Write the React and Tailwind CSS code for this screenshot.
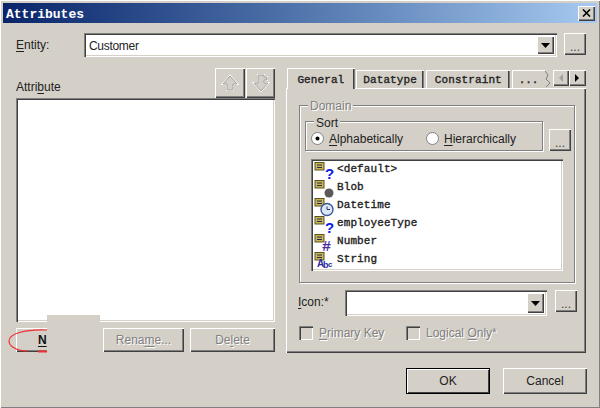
const raised = "shadow-[inset_1px_1px_0_#fff,inset_-1px_-1px_0_#404040,inset_-2px_-2px_0_#808080]";
const sunken = "shadow-[inset_1px_1px_0_#808080,inset_2px_2px_0_#404040,inset_-1px_-1px_0_#fff,inset_-2px_-2px_0_#d4d0c8]";
const dim = "text-[#808080] [text-shadow:1px_1px_0_#fff]";
const mono = "font-['Liberation_Mono'] text-[11px] text-[#222] [-webkit-text-stroke:0.35px_#222]";

function Btn({ className = "", children }) {
  return <div className={`flex items-center justify-center bg-[#d4d0c8] ${raised} ${className}`}>{children}</div>;
}

function Dots() {
  return <Btn className="w-[22px] h-[22px] text-[12px] text-[#404040] leading-none pt-[6px] shrink-0">...</Btn>;
}

function U({ children }) {
  return <span className="underline underline-offset-2">{children}</span>;
}

function Combo({ className = "", text }) {
  return (
    <div className={`flex items-stretch bg-white p-[3px] ${sunken} ${className}`}>
      <div className="flex-1 flex items-center text-[12px] text-[#222] pl-[2px] pt-px tracking-[-0.3px]">{text}</div>
      <Btn className="w-[17px]">
        <svg width="9" height="5" viewBox="0 0 9 5"><path d="M0 0h9L4.5 5z" fill="#000" /></svg>
      </Btn>
    </div>
  );
}

function Tab({ w, active, children }) {
  return (
    <div
      className={`flex items-center justify-center tracking-[0.1px] ${mono} bg-[#d4d0c8] shadow-[inset_1px_1px_0_#fff,inset_-1px_0_0_#808080,inset_-2px_0_0_#404040] ${active ? "relative h-[21px] pt-[4px] -mb-[1px] z-10" : "h-[18px] pt-[2px]"}`}
      style={{ width: w }}
    >
      {children}
    </div>
  );
}

function Group({ className = "", title, titleClass = "", children }) {
  return (
    <div className={`relative border border-[#808080] shadow-[1px_1px_0_#fff,inset_1px_1px_0_#fff] ${className}`}>
      <span className={`absolute left-[8px] px-[2px] bg-[#d4d0c8] text-[12px] leading-[16px] ${titleClass}`}>{title}</span>
      {children}
    </div>
  );
}

function Radio({ checked }) {
  return (
    <svg width="13" height="13" viewBox="0 0 13 13" className="shrink-0">
      <circle cx="6.5" cy="6.5" r="6" fill="#fff" stroke="#808080" />
      {checked && <circle cx="6.5" cy="6.5" r="2" fill="#000" />}
    </svg>
  );
}

const yellow = (
  <g>
    <rect x="2" y="1.5" width="9" height="7.5" fill="#c9b45a" stroke="#5c5420" strokeWidth="1" />
    <rect x="4" y="3.5" width="5" height="1" fill="#1c2f50" />
    <rect x="4" y="6" width="5" height="1" fill="#1c2f50" />
  </g>
);

const glyphs = {
  q: <text x="12" y="18" fontSize="15" fontWeight="bold" fill="#0a20e0" fontFamily="Liberation Sans">?</text>,
  blob: <circle cx="16" cy="14" r="4.5" fill="#5a5a5a" />,
  clock: (
    <g>
      <circle cx="14" cy="12.5" r="6" fill="#dce6f4" stroke="#3a5a96" strokeWidth="1.4" />
      <path d="M14 9.5v3h3" fill="none" stroke="#243a70" />
    </g>
  ),
  hash: <text x="9" y="18" fontSize="15" fontWeight="bold" fill="#4a2a9a" fontFamily="Liberation Mono">#</text>,
  abc: (
    <g fill="#2a2a9a" fontWeight="bold" fontFamily="Liberation Sans">
      <text x="4" y="16" fontSize="10">A</text>
      <text x="10" y="17" fontSize="9">b</text>
      <text x="15" y="16" fontSize="8">c</text>
    </g>
  ),
};

const rows = [
  ["<default>", "q"],
  ["Blob", "blob"],
  ["Datetime", "clock"],
  ["employeeType", "q"],
  ["Number", "hash"],
  ["String", "abc"],
];

function ListRow({ label, glyph }) {
  return (
    <div className="flex items-center h-[18px] shrink-0">
      <svg width="24" height="18" viewBox="0 0 24 18" className="shrink-0 overflow-visible">
        {yellow}
        {glyphs[glyph]}
      </svg>
      <span className={`${mono} tracking-[0.1px] mb-[2px]`}>{label}</span>
    </div>
  );
}

function Check({ label, className = "" }) {
  return (
    <div className={`flex items-center gap-[6px] ${className}`}>
      <div className={`w-[14px] h-[14px] bg-[#d4d0c8] ${sunken}`} />
      <span className={`text-[12px] ${dim}`}>{label}</span>
    </div>
  );
}

export default function App() {
  return (
    <div className="relative w-[600px] h-[408px] overflow-hidden bg-[#d4d0c8] p-[3px] font-['Liberation_Sans'] shadow-[inset_1px_1px_0_#fff,inset_-1px_-1px_0_#808080]">
      <div className="flex items-center justify-between h-[20px] pl-[3px] pr-[2px] bg-gradient-to-r from-[#0a246a] to-[#a6caf0]">
        <span className="font-['Liberation_Mono'] font-bold text-[13px] text-white pt-[3px]">Attributes</span>
        <Btn className="w-[17px] h-[15px]">
          <svg width="9" height="8" viewBox="0 0 9 8"><path d="M1 0.5l7 7M8 0.5l-7 7" stroke="#000" strokeWidth="1.6" /></svg>
        </Btn>
      </div>

      <div className="pl-[13px]">
        <div className="flex items-start mt-[10px]">
          <div className="w-[68px] h-[24px] flex items-center text-[12px] text-[#222]"><span><U>E</U>ntity:</span></div>
          <Combo className="w-[473px] h-[24px]" text="Customer" />
          <div className="ml-[7px]"><Dots /></div>
        </div>

        <div className="flex mt-[11px]">
          <div className="w-[259px] mr-[11px]">
            <div className="flex items-end justify-between h-[30px]">
              <span className="text-[12px] text-[#222] leading-[16px] mb-[3px]">Attri<U>b</U>ute</span>
              <div className="flex gap-px">
                <Btn className="w-[30px] h-[30px]">
                  <svg width="18" height="18" viewBox="0 0 18 18"><path d="M9 2L16 10H12V16H6V10H2Z" fill="none" stroke="#fff" strokeWidth="2" /><path d="M9 2L16 10H12V16H6V10H2Z" fill="#d4d0c8" stroke="#a0a0a0" /></svg>
                </Btn>
                <Btn className="w-[29px] h-[30px]">
                  <svg width="18" height="18" viewBox="0 0 18 18"><path d="M6 1H12V3H15V6H12V9H16L9 17L2 9H6Z" fill="none" stroke="#fff" strokeWidth="2" /><path d="M6 1H12V3H15V6H12V9H16L9 17L2 9H6Z" fill="#d4d0c8" stroke="#a0a0a0" /></svg>
                </Btn>
              </div>
            </div>
            <div className={`h-[224px] bg-white ${sunken}`} />
            <div className="flex justify-between mt-[6px]">
              <Btn className="w-[81px] h-[24px] text-[12px] font-bold text-[#111] justify-start pl-[22px]"><U>N</U></Btn>
              <div className="flex gap-[6px]">
                <Btn className={`w-[81px] h-[24px] text-[12px] ${dim}`}><span>Rena<U>m</U>e...</span></Btn>
                <Btn className={`w-[85px] h-[24px] text-[12px] ${dim}`}><span>De<U>l</U>ete</span></Btn>
              </div>
            </div>
          </div>

          <div className="w-[300px]">
            <div className="flex items-end h-[20px] pl-px">
              <Tab w={68} active>General</Tab>
              <div className="w-px" />
              <Tab w={69}>Datatype</Tab>
              <div className="w-[2px]" />
              <Tab w={84}>Constraint</Tab>
              <div className="w-[2px]" />
              <div className={`relative flex items-center justify-center w-[33px] h-[18px] pt-[2px] bg-[#d4d0c8] shadow-[inset_1px_1px_0_#fff] ${mono}`}>...</div>
              <svg width="6" height="18" viewBox="0 0 6 18" className="shrink-0">
                <path d="M0 1L3 5L1 9L5 13L1 17" fill="none" stroke="#808080" />
              </svg>
              <div className="flex ml-[2px] mb-[2px]">
                <Btn className="w-[16px] h-[16px]">
                  <svg width="5" height="8" viewBox="0 0 5 8"><path d="M4 0v8L0 4z" fill="#a0a0a0" /></svg>
                </Btn>
                <Btn className="w-[17px] h-[16px]">
                  <svg width="5" height="8" viewBox="0 0 5 8"><path d="M0 0v8l4-4z" fill="#000" /></svg>
                </Btn>
              </div>
            </div>

            <div className="h-[265px] pl-[13px] pt-[17px] shadow-[inset_1px_1px_0_#fff,inset_-1px_-1px_0_#404040,inset_-2px_-2px_0_#808080]">
              <Group className="w-[276px] h-[178px] pl-[5px] pt-[15px]" title="Domain" titleClass={`-top-[8px] ${dim}`}>
                <div className="flex items-end gap-[6px]">
                  <Group className="w-[238px] h-[30px]" title="Sort" titleClass="-top-[7px] text-[#222]">
                    <div className="flex items-center h-full pl-[5px] pt-[5px] text-[12px] text-[#222]">
                      <Radio checked />
                      <span className="ml-[5px] w-[97px]"><U>A</U>lphabetically</span>
                      <Radio />
                      <span className="ml-[5px]"><U>H</U>ierarchically</span>
                    </div>
                  </Group>
                  <Dots />
                </div>
                <div className={`flex flex-col overflow-hidden mt-[8px] ml-[6px] w-[252px] h-[112px] bg-white p-[2px] ${sunken}`}>
                  {rows.map(([label, glyph], i) => (
                    <ListRow key={i} label={label} glyph={glyph} />
                  ))}
                </div>
              </Group>

              <div className="flex items-start mt-[7px] -ml-px">
                <div className="w-[47px] h-[24px] flex items-center text-[12px] text-[#222]"><span><U>I</U>con:*</span></div>
                <Combo className="w-[202px] h-[26px]" text="" />
                <div className="ml-[8px]"><Dots /></div>
              </div>

              <div className="flex items-center mt-[8px]">
                <Check label={<span><U>P</U>rimary Key</span>} className="w-[107px]" />
                <Check label={<span>Logical <U>O</U>nly*</span>} />
              </div>
            </div>
          </div>
        </div>

        <div className="flex justify-end gap-[13px] mt-[15px] pr-[10px]">
          <Btn className="w-[84px] h-[26px] text-[12px] text-[#222] outline outline-1 -outline-offset-1 outline-black shadow-[inset_2px_2px_0_#fff,inset_-2px_-2px_0_#404040]">OK</Btn>
          <Btn className="w-[84px] h-[26px] text-[12px] text-[#222]">Cancel</Btn>
        </div>
      </div>

      <div className="absolute left-[47px] top-[315px] w-[53px] h-[60px] bg-[#d4d0c8]" />
      <svg className="absolute left-0 top-[325px]" width="47" height="30" viewBox="0 0 47 30">
        <path d="M47 5C24 4 9 9 9 16C9 22 18 26 28 26" fill="none" stroke="#ee3030" strokeWidth="1.2" />
        <path d="M38 26.5H47" stroke="#ee3030" strokeWidth="2" />
      </svg>
    </div>
  );
}
